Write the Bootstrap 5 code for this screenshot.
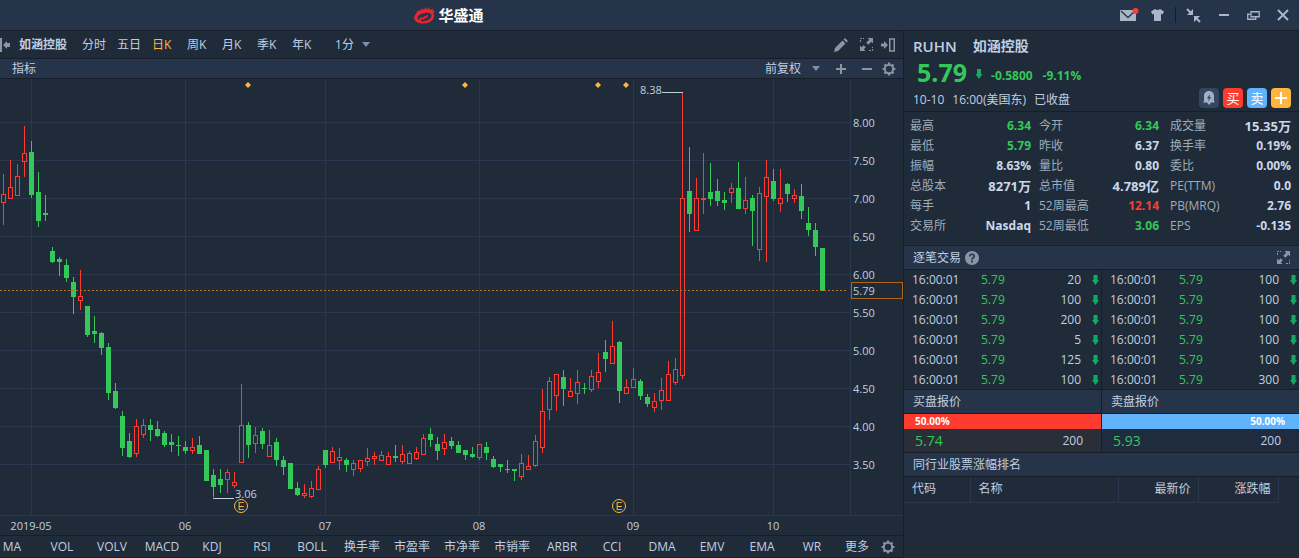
<!DOCTYPE html>
<html lang="zh-CN" data-bs-theme="dark">
<head>
<meta charset="utf-8">
<meta name="viewport" content="width=device-width, initial-scale=1">
<title>华盛通 - RUHN 如涵控股</title>
<link href="https://cdn.jsdelivr.net/npm/bootstrap@5.3.0/dist/css/bootstrap.min.css" rel="stylesheet">
<style>
:root{--bg:#1f2b39;--bar:#253449;--edge:#181d2a;--grid:#2b374f;--txt:#c0cfe0;--dim:#9fabb9;--ico:#8b95a5;--up:#ff3b30;--down:#34c759;--blue:#5fb3fc;--gold:#ffb640}
body{background:var(--bg);color:var(--txt);font:12px/20px "Open Sans","Noto Sans CJK SC",sans-serif}
svg{display:block;flex:none}
.bare{background:none;border:0;padding:0;color:inherit;font:inherit;line-height:20px}
.bar{background:var(--bar)}
.edge{border-bottom:1px solid var(--edge)}
.title-row{height:31px}
.brand-box{flex:0 0 37%;margin-left:3px}
.brand-name{font-size:15px;font-weight:700;color:#fff}
.win{color:#a9b6ca;gap:17px;padding-right:10px}
.ico{color:var(--ico)}
.tools{margin-right:7px}
.tabs-row{height:28px}
.sub-row{height:20px}
.period{gap:11px}
.period .tab-k{width:24px;text-align:left}
.period .active{color:var(--gold)}
.stock-name{font-weight:700;margin:0 4px 0 9px}
.pick{appearance:none;background:none;border:0;padding:0;color:var(--txt);font:inherit;line-height:20px}
.caret{width:8px;height:5px;background:#8190aa;clip-path:polygon(0 0,100% 0,50% 100%);pointer-events:none}
.near{gap:10px}
.side{flex:0 0 396px;border-left:1px solid var(--edge)}
.indicators{height:22px;margin-left:-13px}
.indicators .cell-i{flex:0 0 50px;text-align:center;white-space:nowrap}
.indicators .more{flex:0 0 40px}
.down{color:var(--down)}
.up{color:var(--up)}
.quote{height:81px;padding:3px 8px 0 9px}
.code{font-size:15px;font-weight:600;line-height:24px}
.cname{font-size:14px;font-weight:600;line-height:24px}
.last{font-size:25px;font-weight:700;line-height:28px}
.chg{font-weight:700}
.chg+.chg{margin-left:10px}
.tile{width:20px;height:20px;border-radius:4px;color:#fff;font-size:13px;display:flex;align-items:center;justify-content:center}
.tile.bell{background:#34465f;color:#a2afc4}
.tile.buy{background:var(--up)}
.tile.sell{background:var(--blue)}
.tile.add{background:var(--gold)}
.grid-tb{width:100%;table-layout:fixed;border-collapse:collapse}
.grid-tb th,.grid-tb td{padding:0;height:20px;line-height:20px;white-space:nowrap}
.stats{height:134px;padding:4px 8px 0 6px}
.stats th{font-weight:400;color:var(--dim)}
.stats td{font-weight:700;text-align:right;color:#cbd8ea}
.stats td.down{color:var(--down)}
.stats td.up{color:var(--up)}
.stats th+td+th{padding-left:8px}
.stats th:nth-child(5){padding-left:11px}
.stats td.unit{font-size:13px}
.head{height:24px;padding:0 9px;line-height:23px}
.half{flex:1 1 0;min-width:0}
.half+.half{border-left:1px solid var(--edge)}
.tick-list{height:120px}
.ticks{padding-left:8px}
.ticks td:nth-child(3){text-align:right}
.ticks svg{margin:0 2px 0 auto}
.share{height:15px;line-height:15px;font-size:10px;font-weight:700;color:#fff;padding:0 14px 0 11px}
.share.buy{background:var(--up)}
.share.sell{background:var(--blue);text-align:right}
.bid-row{background:#2a2e38}
.ask-row{background:#1f2c40}
.level{height:24px;padding:0 18px 0 11px}
.level .px{font-size:14px}
.rank th{font-weight:400;height:25px;padding:0 7px 0 8px;border-right:1px solid var(--grid);border-bottom:1px solid var(--grid)}
.rank{width:374px}
.chart{width:100%;height:auto}
.chart text{font-size:11px;fill:var(--txt)}
.chart .mk{font-family:"Liberation Sans",sans-serif;font-size:10px;fill:var(--gold)}
</style>
</head>
<body>
<svg width="0" height="0" class="position-absolute" aria-hidden="true">
  <defs>
    <symbol id="gear" viewBox="0 0 14 14"><circle cx="7" cy="7" r="4.2" fill="none" stroke="currentColor" stroke-width="2"/><g stroke="currentColor" stroke-width="2.2"><path d="M7 .6v2M7 11.4v2M.6 7h2M11.4 7h2M2.5 2.5l1.3 1.3M10.2 10.2l1.3 1.3M2.5 11.5l1.3-1.3M10.2 3.8l1.3-1.3"/></g></symbol>
    <symbol id="expand" viewBox="0 0 13 13"><path d="M.5 4V.5H4M9 12.5h3.500V9" fill="none" stroke="currentColor" stroke-dasharray="2 1"/><path d="M7.500 0H13v5.500l-1.700-1.700-3 3L6.200 4.700l3-3zM5.500 13H0V7.500l1.700 1.700 2-2 2.100 2.100-2 2z" fill="currentColor"/></symbol>
    <symbol id="fall" viewBox="0 0 7 10"><path d="M1.500 0h4v5H7L3.500 10 0 5h1.500z" fill="#16a765"/></symbol>
  </defs>
</svg>
<div class="d-flex flex-column min-vh-100">
  <header class="title-row bar edge d-flex align-items-center justify-content-between">
    <div class="d-flex justify-content-end align-items-center gap-1 brand-box">
      <svg width="21" height="17" viewBox="0 0 21 17"><path fill="#ee2430" fill-rule="evenodd" d="M2 7C3 4 5 3 6 3l-.5 1.500C7 3 8 2 9 1l-.2 2C10.500 2 11.500 1 12.500 0l-.3 2.500C13.500 2 15 1 16 .3l-.8 2.700c1.500-.3 2.800-.8 4-1.500L18.400 4 21 3.600 19.300 6c2 4-.8 8.500-6 10C7 17.500 1 15.500.2 11.500 0 9.500.8 8 2 7zm1.500 3.500c-.5 3 3.500 4.500 8 3.500 5-1.200 7-4.500 5.500-7C15 4.500 5 5.500 3.500 10.500z"/><path fill="#ee2430" d="M4 13.500 7 10l1.500 1 2-2 1 .6L14 7l-.8 4-1.500-.4-1.700 2.200-1.500-1-2.500 2.500z"/></svg>
      <span class="brand-name">华盛通</span>
    </div>
    <div class="win d-flex align-items-center">
      <div class="d-flex align-items-center">
        <button class="bare me-2 pe-1" aria-label="消息"><svg width="20" height="16" viewBox="0 0 20 16"><path d="M1 3h16v11H1z" fill="currentColor"/><path d="M2 4l7 6.500L16 4" fill="none" stroke="#253449" stroke-width="1.300"/><circle cx="16.500" cy="4" r="3" fill="#ff3b30"/></svg></button>
        <button class="bare" aria-label="皮肤"><svg width="13" height="12" viewBox="0 0 13 12"><path d="M4 0q2.500 2 5 0l4 2.500-1.400 3-1.600-.7V12H3V4.800l-1.600.7L0 2.500z" fill="currentColor"/></svg></button>
        <svg class="ms-1 me-2" width="10" height="16"><path d="M7.500 0v16" stroke="#171c29"/></svg>
        <button class="bare" aria-label="收起"><svg width="15" height="15" viewBox="0 0 15 15"><path d="M1 1l4 4M10 10l4 4" stroke="currentColor" stroke-width="2"/><path d="M7 1v6H1zM8 8h6l-6 6z" fill="currentColor"/></svg></button>
      </div>
      <button class="bare" aria-label="最小化"><svg width="12" height="12"><path d="M1 6h10" stroke="currentColor" stroke-width="2"/></svg></button>
      <button class="bare" aria-label="还原"><svg width="13" height="9" viewBox="0 0 13 9"><path d="M4 .75h8.200v5H4zM3 3.250H.75v5h8V6.500" fill="none" stroke="currentColor" stroke-width="1.300"/></svg></button>
      <button class="bare" aria-label="关闭"><svg width="12" height="12"><path d="M1 1l10 10M11 1L1 11" stroke="currentColor" stroke-width="2"/></svg></button>
    </div>
  </header>

  <div class="d-flex flex-fill">
    <main class="flex-fill overflow-hidden" style="flex-basis:0">
      <div class="tabs-row edge d-flex align-items-center justify-content-between">
        <nav class="d-flex align-items-center period">
          <button class="bare d-flex align-items-center"><svg class="ico" width="10" height="14"><path d="M0 0h2v14H0zM3 7l4-4v2h3v4H7v2z" fill="currentColor"/></svg><span class="stock-name">如涵控股</span></button>
          <button class="bare tab-k">分时</button><button class="bare tab-k">五日</button><button class="bare tab-k active">日K</button><button class="bare tab-k">周K</button><button class="bare tab-k">月K</button><button class="bare tab-k">季K</button><button class="bare tab-k">年K</button>
          <div class="d-flex align-items-center ms-2 gap-2"><select class="pick" aria-label="分钟周期"><option>1分</option></select><span class="caret"></span></div>
        </nav>
        <div class="d-flex align-items-center ico tools gap-2">
          <button class="bare me-1" aria-label="画线"><svg width="14" height="14" viewBox="0 0 14 14"><path d="M0 14l1-4L8.500 2.500l3 3L4 13zM9.500 1.500L11 0l3 3-1.500 1.500z" fill="currentColor"/></svg></button>
          <button class="bare" aria-label="全屏"><svg width="13" height="13"><use href="#expand"/></svg></button>
          <button class="bare" aria-label="收起侧栏"><svg width="15" height="14"><path d="M7 7L3 3v2.500H0v3h3V11z" fill="currentColor"/><path d="M8.750 1h4.500v12h-4.500z" fill="none" stroke="currentColor" stroke-width="1.500"/></svg></button>
        </div>
      </div>
      <div class="sub-row bar edge d-flex align-items-center justify-content-between">
        <button class="bare ms-2 ps-1">指标</button>
        <div class="d-flex align-items-center ico tools gap-3">
          <div class="d-flex align-items-center near"><select class="pick" aria-label="复权方式"><option>前复权</option></select><span class="caret"></span></div>
          <button class="bare" aria-label="放大"><svg width="10" height="10"><path d="M0 5h10M5 0v10" stroke="currentColor" stroke-width="2"/></svg></button>
          <div class="d-flex align-items-center near">
            <button class="bare" aria-label="缩小"><svg width="10" height="10"><path d="M0 5h10" stroke="currentColor" stroke-width="2"/></svg></button>
            <button class="bare" aria-label="设置"><svg width="14" height="14"><use href="#gear"/></svg></button>
          </div>
        </div>
      </div>
      <svg class="chart" id="kline" viewBox="0 79 903 456" role="img" aria-label="日K线图"></svg>
      <div class="edge"></div>
      <div class="indicators edge d-flex align-items-center">
        <button class="bare cell-i">MA</button><button class="bare cell-i">VOL</button><button class="bare cell-i">VOLV</button><button class="bare cell-i">MACD</button><button class="bare cell-i">KDJ</button><button class="bare cell-i">RSI</button><button class="bare cell-i">BOLL</button><button class="bare cell-i">换手率</button><button class="bare cell-i">市盈率</button><button class="bare cell-i">市净率</button><button class="bare cell-i">市销率</button><button class="bare cell-i">ARBR</button><button class="bare cell-i">CCI</button><button class="bare cell-i">DMA</button><button class="bare cell-i">EMV</button><button class="bare cell-i">EMA</button><button class="bare cell-i">WR</button><button class="bare more">更多</button>
        <button class="bare ico ms-1" aria-label="指标设置"><svg width="14" height="14"><use href="#gear"/></svg></button>
      </div>
    </main>

    <aside class="side">
      <section class="quote edge">
        <div class="d-flex gap-3"><span class="code">RUHN</span><span class="cname">如涵控股</span></div>
        <div class="d-flex align-items-center down"><span class="last ms-1">5.79</span><svg class="ms-2 me-2 mt-1" width="8" height="10"><use href="#fall"/></svg><span class="chg mt-2">-0.5800</span><span class="chg mt-2">-9.11%</span></div>
        <div class="d-flex align-items-center justify-content-between">
          <div class="d-flex gap-2 mt-1"><span>10-10</span><span>16:00(美国东)</span><span>已收盘</span></div>
          <div class="d-flex gap-1">
            <button class="bare tile bell" aria-label="提醒"><svg width="12" height="14" viewBox="0 0 12 14"><path d="M6 0c3.500 0 5 2.500 5 5v5l1 1.500H8L6 14l-2-2.500H0L1 10V5c0-2.500 1.500-5 5-5z" fill="currentColor"/><path d="M7 3L4 7.200h1.800L5 10.500 8.200 6H6.400z" fill="#34465f"/></svg></button>
            <button class="bare tile buy">买</button><button class="bare tile sell">卖</button>
            <button class="bare tile add" aria-label="添加"><svg width="12" height="12"><path d="M0 6h12M6 0v12" stroke="#fff" stroke-width="2"/></svg></button>
          </div>
        </div>
      </section>
      <section class="stats edge">
        <table class="grid-tb">
          <colgroup><col style="width:56px"><col style="width:65px"><col style="width:64px"><col style="width:64px"><col style="width:72px"><col></colgroup>
          <tr><th>最高</th><td class="down">6.34</td><th>今开</th><td class="down">6.34</td><th>成交量</th><td class="unit">15.35万</td></tr>
          <tr><th>最低</th><td class="down">5.79</td><th>昨收</th><td>6.37</td><th>换手率</th><td>0.19%</td></tr>
          <tr><th>振幅</th><td>8.63%</td><th>量比</th><td>0.80</td><th>委比</th><td>0.00%</td></tr>
          <tr><th>总股本</th><td class="unit">8271万</td><th>总市值</th><td class="unit">4.789亿</td><th>PE(TTM)</th><td>0.0</td></tr>
          <tr><th>每手</th><td>1</td><th>52周最高</th><td class="up">12.14</td><th>PB(MRQ)</th><td>2.76</td></tr>
          <tr><th>交易所</th><td>Nasdaq</td><th>52周最低</th><td class="down">3.06</td><th>EPS</th><td>-0.135</td></tr>
        </table>
      </section>
      <section>
        <div class="head bar edge d-flex align-items-center justify-content-between">
          <span class="d-flex align-items-center gap-1">逐笔交易<svg width="14" height="14" viewBox="0 0 14 14"><circle cx="7" cy="7" r="7" fill="#8b95a5"/><path d="M4.800 5.500c0-3 4.600-2.800 4.400-.2C9 6.800 7 6.800 7 8.600" fill="none" stroke="#253449" stroke-width="1.600"/><path d="M6.100 9.600h1.800v1.800H6.100z" fill="#253449"/></svg></span>
          <button class="bare ico" aria-label="展开"><svg width="13" height="13"><use href="#expand"/></svg></button>
        </div>
        <div class="d-flex edge tick-list" id="ticks"></div>
      </section>
      <section>
        <div class="d-flex">
          <div class="half"><div class="head bar edge">买盘报价</div><div class="share buy">50.00%</div><div class="level bid-row edge d-flex align-items-center justify-content-between"><span class="px down">5.74</span><span>200</span></div></div>
          <div class="half"><div class="head bar edge">卖盘报价</div><div class="share sell">50.00%</div><div class="level ask-row edge d-flex align-items-center justify-content-between"><span class="px down">5.93</span><span>200</span></div></div>
        </div>
        <div class="head bar edge">同行业股票涨幅排名</div>
        <table class="grid-tb rank">
          <colgroup><col style="width:66px"><col style="width:148px"><col style="width:80px"><col style="width:80px"></colgroup>
          <thead><tr><th>代码</th><th>名称</th><th class="text-end">最新价</th><th class="text-end">涨跌幅</th></tr></thead>
        </table>
      </section>
    </aside>
  </div>
</div>
<script src="https://cdn.jsdelivr.net/npm/bootstrap@5.3.0/dist/js/bootstrap.bundle.min.js"></script>
<script>
// One candle per trading day: high, body top, body bottom, low, direction
const candles = `174 194 203 225 r;160 187 199 199 r;164 176 196 196 r;126 153 162 177 r;141 152 195 198 g;172 192 221 227 g;195 213 215 221 g;247 251 262 263 g;257 259 262 276 g;259 265 278 282 g;277 282 297 314 g;270 296 301 310 r;306 306 335 337 g;316 331 334 343 g;332 333 348 355 g;343 347 393 400 g;383 391 408 409 g;411 416 448 456 g;433 441 457 458 g;419 426 454 457 r;419 425 435 438 r;419 425 430 441 g;421 429 436 437 g;431 433 445 447 g;434 442 445 452 g;436 445 446 456 g;441 447 451 454 g;438 447 451 454 r;436 445 454 454 g;450 450 481 481 g;469 475 487 497 g;469 479 485 493 g;469 472 480 493 r;472 482 486 488 r;384 425 463 463 r;422 425 445 458 g;427 435 444 453 r;428 431 444 449 g;430 445 457 457 r;438 442 460 466 g;456 460 467 475 g;463 463 489 489 g;482 488 495 496 g;484 493 496 498 r;481 488 497 498 r;466 469 490 490 r;450 450 465 468 g;447 451 463 463 r;448 457 461 470 r;458 460 465 472 g;460 463 470 476 r;460 460 469 472 r;448 458 462 466 r;452 456 459 465 r;451 455 461 461 r;452 456 465 465 r;445 456 458 462 g;445 454 462 464 r;451 453 464 464 r;447 452 459 460 r;434 438 455 455 r;428 434 440 447 g;437 444 451 460 g;434 442 449 455 r;437 441 446 449 g;441 445 453 453 g;450 450 455 460 g;447 454 457 458 g;444 444 458 460 r;442 447 453 460 g;456 459 467 468 g;464 464 467 472 g;460 469 470 473 g;469 469 471 481 g;454 463 477 480 r;455 466 470 470 r;435 441 466 467 r;389 411 448 453 r;377 381 410 420 r;374 374 396 411 r;370 377 389 406 g;378 391 397 397 r;370 382 394 404 r;383 388 389 394 g;370 376 390 392 r;353 372 382 388 r;340 352 359 372 g;321 346 364 364 r;341 342 391 403 g;379 387 394 394 r;368 379 388 388 r;379 381 396 400 g;394 397 404 407 g;393 401 408 412 r;378 390 401 410 r;361 374 401 401 r;358 369 383 385 r;92 198 376 379 r;147 191 214 232 g;178 198 231 231 r;153 198 200 214 r;163 192 199 206 g;179 191 201 206 g;192 200 203 210 g;183 188 193 203 r;162 188 209 209 g;177 200 209 214 r;195 198 211 246 g;187 193 250 261 r;160 177 197 262 r;169 181 199 201 g;169 198 204 212 r;183 184 194 202 g;189 195 199 203 r;184 196 211 219 g;207 223 230 236 g;223 230 247 256 g;248 248 291 291 g`.split(';').map(s => s.split(' '));
const c = {r: 'var(--up)', g: 'var(--down)'};
let s = '';
const line = (x, y, w, h, f) => `<rect x="${x}" y="${y}" width="${w}" height="${h}" fill="${f}"/>`;
['8.00','7.50','7.00','6.50','6.00','5.50','5.00','4.50','4.00','3.50'].forEach((t, i) => {
  const y = 122 + i * 38;
  s += line(0, y, 850, 1, 'var(--grid)') + `<text x="853" y="${y + 5}">${t}</text>`;
});
[[31,'2019-05'],[185,'06'],[325,'07'],[479,'08'],[633,'09'],[773,'10'],[850,'']].forEach(([x, t]) => {
  s += line(x, 79, 1, 436, 'var(--grid)') + `<text x="${x}" y="530" text-anchor="middle">${t}</text>`;
});
s += line(0, 515, 903, 1, 'var(--grid)');
candles.forEach(([hi, a, b, lo, k], i) => {
  const x = 3 + 7 * i; hi = +hi; a = +a; b = +b; lo = +lo;
  if (k === 'g') s += line(x, hi, 1, lo - hi, c.g) + line(x - 2, a, 5, b - a, c.g);
  else {
    s += line(x, hi, 1, a - hi, c.r) + line(x, b, 1, lo - b, c.r);
    s += `<rect x="${x - 1.5}" y="${a + .5}" width="4" height="${b - a - 1}" fill="none" stroke="${c.r}"/>`;
  }
});
s += '<path d="M0 290.5h848" stroke="#c0701c" stroke-dasharray="2 2"/><rect x="851.5" y="282.500" width="51" height="16" fill="var(--bg)" stroke="#b0661a"/><text x="853" y="295">5.79</text>';
s += line(662, 92, 21, 1, 'var(--txt)') + '<text x="640" y="94">8.38</text>' + line(213, 498, 21, 1, 'var(--txt)') + '<text x="235" y="498">3.06</text>';
[248, 465, 598, 626].forEach(x => s += `<path d="M${x} 82l3 3-3 3-3-3z" fill="var(--gold)"/>`);
[241, 619].forEach(x => s += `<circle cx="${x}" cy="506" r="6.500" fill="none" stroke="var(--gold)"/><text class="mk" x="${x}" y="510" text-anchor="middle">E</text>`);
document.getElementById('kline').innerHTML = s;

const half = q => '<div class="half ticks"><table class="grid-tb"><colgroup><col style="width:69px"><col style="width:40px"><col><col style="width:20px"></colgroup>' +
  q.map(n => `<tr><td>16:00:01</td><td class="down">5.79</td><td>${n}</td><td><svg width="7" height="10"><use href="#fall"/></svg></td></tr>`).join('') + '</table></div>';
document.getElementById('ticks').innerHTML = half([20, 100, 200, 5, 125, 100]) + half([100, 100, 100, 100, 100, 300]);
</script>
</body>
</html>
